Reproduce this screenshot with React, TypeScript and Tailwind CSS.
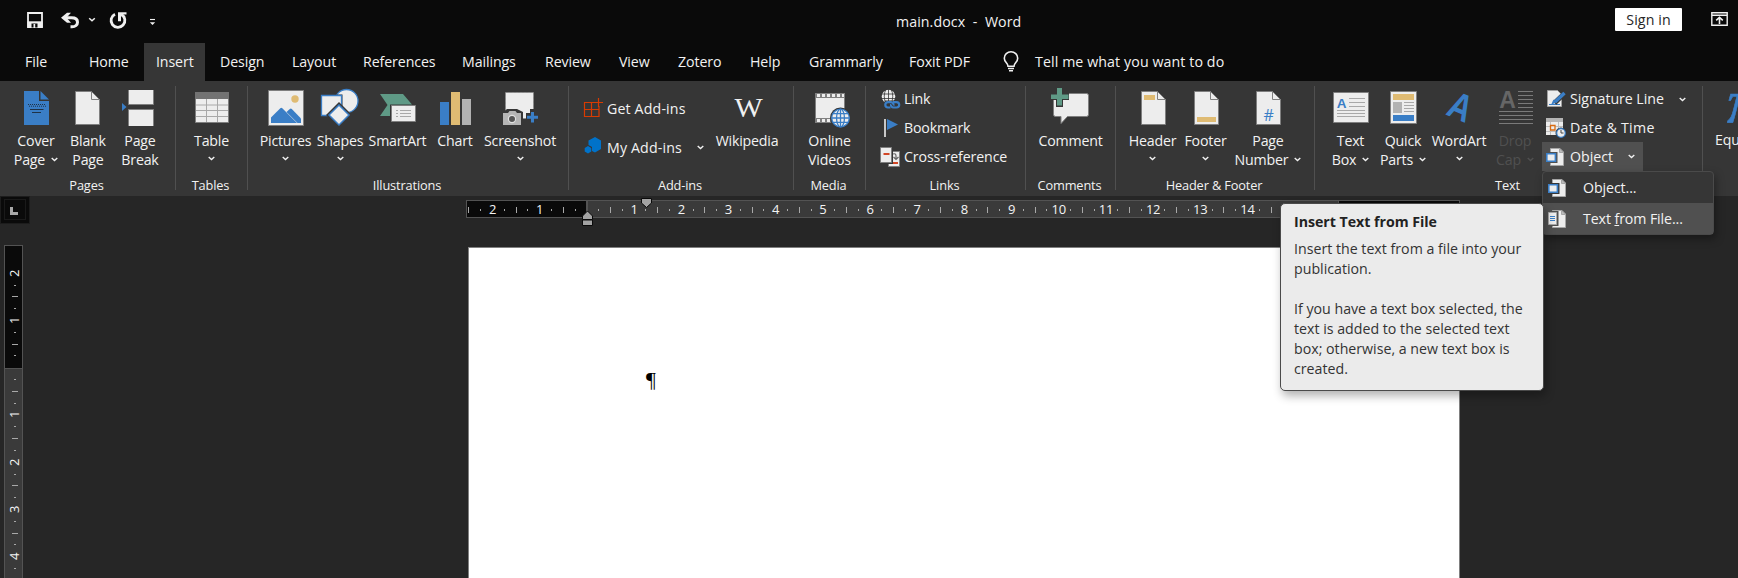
import React from "react";

const BLUE = "#3a7ec6";
const PAPER = "#ededed";
const EDGE = "#7f7f7f";
const GOLD = "#dfbb73";
const GREEN = "#5f9a86";

function Chevron({ className = "" }: { className?: string }) {
  return (
    <svg width="7" height="5" viewBox="0 0 7 5" className={`shrink-0 ${className}`} fill="none" stroke="currentColor" strokeWidth="1.4">
      <path d="M0.7 1 L3.5 3.5 L6.3 1" />
    </svg>
  );
}

type BigProps = { x: number; w: number; size: string; top: string; bottom?: string; menu?: boolean; dim?: boolean; children: React.ReactNode };

function Big({ x, w, size, top, bottom, menu, dim, children }: BigProps) {
  return (
    <button className={`flex h-[92px] shrink-0 flex-col items-center ${size} ${dim ? "text-[#505050]" : "text-[#f2f2f2]"}`}>
      <svg width={w} height="46" viewBox={`${x} 84 ${w} 46`} className="mt-[3px] shrink-0">
        {children}
      </svg>
      <span className="-mb-px flex h-[21px] items-center whitespace-nowrap">{top}</span>
      <span className="flex h-5 items-center gap-[6px] whitespace-nowrap">
        {bottom}
        {menu && <Chevron className={bottom ? "-mt-[2px]" : "-mt-[3px]"} />}
      </span>
    </button>
  );
}

function Group({ label, className, children }: { label: string; className: string; children: React.ReactNode }) {
  return (
    <section className={`relative flex h-full shrink-0 flex-col ${className}`}>
      <div className="flex h-[94px]">{children}</div>
      <div className="mt-px flex h-5 items-center justify-center pr-[3px] text-[12.8px] tracking-[-0.15px] whitespace-nowrap">{label}</div>
      <span className="absolute top-[5px] right-0 h-[104px] w-px bg-[#505050]" />
    </section>
  );
}

function Row({ icon, label, className = "h-[29px]", menu = false }: { icon: React.ReactNode; label: string; className?: string; menu?: boolean }) {
  return (
    <button className={`flex items-center whitespace-nowrap ${className}`}>
      {icon}
      <span>{label}</span>
      {menu && <Chevron className="ml-[15px]" />}
    </button>
  );
}

function Sheet({ x, children }: { x: number; children?: React.ReactNode }) {
  return (
    <g>
      <path d={`M${x + 0.5} 91.5h16l8 8v25h-24z`} fill={PAPER} stroke={EDGE} />
      <path d={`M${x + 16.5} 91.5v8h8`} fill="none" stroke={EDGE} />
      {children}
    </g>
  );
}

function SmallDoc({ text = false, backdrop }: { text?: boolean; backdrop: string }) {
  return (
    <svg width="18" height="18" viewBox="0 0 18 18" className="shrink-0">
      <path d="M4.5 .5h9.5l3.5 3.5v13.5h-13z" fill={PAPER} stroke="#a6a6a6" />
      <path d="M13.5 .5v4h4z" fill="#bbb" stroke="#a6a6a6" />
      {text ? (
        <g>
          <path d="M0 1h10.5v15H0z" fill={backdrop} />
          <path d="M.5 2.5h8v12h-8z" fill={PAPER} stroke="#a6a6a6" />
          <path d="M2 6.5h5M2 8.5h5M2 10.5h5" stroke={BLUE} />
        </g>
      ) : (
        <g>
          <path d="M0 4h11.5v11H0z" fill={backdrop} />
          <path d="M.8 5.8h8.6v7.4H.8z" fill={PAPER} stroke={BLUE} strokeWidth="1.6" />
        </g>
      )}
    </svg>
  );
}

const TABS: [string, string][] = [
  ["File", "w-[63px]"],
  ["Home", "w-[68px] pl-[13px]"],
  ["Insert", "w-[61px] mr-[2px] bg-[#363636]"],
  ["Design", "w-[73px] pl-[13px]"],
  ["Layout", "w-[71px]"],
  ["References", "w-[99px]"],
  ["Mailings", "w-[83px]"],
  ["Review", "w-[74px]"],
  ["View", "w-[59px]"],
  ["Zotero", "w-[72px]"],
  ["Help", "w-[59px]"],
  ["Grammarly", "w-[100px]"],
  ["Foxit PDF", "w-[94px]"],
];

function TitleBar() {
  return (
    <header className="flex h-[43px] items-start">
      <div className="flex h-[43px] w-[806px] pt-[8px] pl-[24px]">
        <svg width="140" height="26" viewBox="24 8 140 26" fill="none" stroke="#f0f0f0">
          <path d="M28 13h14v14h-14z" strokeWidth="1.8" />
          <path d="M27.5 21.3h15v6h-15z" fill="#f0f0f0" stroke="none" />
          <path d="M31.5 23.5h6v4h-6z" fill="#0a0a0a" stroke="none" />
          <path d="M33.5 24h1.7v4h-1.7z" fill="#f0f0f0" stroke="none" />
          <path d="M64 17.8h7.5c4 0 6 2 6 4.4s-2 4.6-5.5 4.6h-1.5" strokeWidth="3" />
          <path d="M61 17.8l6-5h4l-4.5 5 4.5 5h-4z" fill="#f0f0f0" stroke="none" />
          <path d="M89.2 18.2l2.8 2.6 2.8-2.6" strokeWidth="1.5" />
          <path d="M115 14.2a6.9 6.9 0 1 0 6.5 .3" strokeWidth="2.8" />
          <path d="M118 12.2h8.5v2.3h-3.2l-2.3 2v4.800h-3z" fill="#f0f0f0" stroke="none" />
          <path d="M150 19.5h5" strokeWidth="1.1" />
          <path d="M149.8 22.2h5.400l-2.700 2.800z" fill="#f0f0f0" stroke="none" />
        </svg>
      </div>
      <div className="flex h-[43px] flex-1 justify-start pl-[90px] leading-[43px] tracking-[0.08px] whitespace-pre">main.docx&nbsp; -&nbsp; Word</div>
      <div className="mt-[8px] mr-[29px] flex h-[23px] w-[67px] items-center justify-center rounded-[1px] bg-white tracking-[0.1px] text-[#262626]">Sign in</div>
      <svg width="17" height="14" viewBox="0 0 17 14" className="mt-[12px] mr-[10px]" fill="none" stroke="#f0f0f0">
        <path d="M.8.8h15.4v12.4H.8zM.8 3.2h15.4" strokeWidth="1.4" />
        <path d="M8.5 12V5.5M5.2 8.3l3.3-3 3.3 3" strokeWidth="1.6" />
      </svg>
    </header>
  );
}

function Tabs() {
  return (
    <nav className="flex h-[38px] pl-[13px]">
      {TABS.map(([name, size]) => (
        <div key={name} className={`flex shrink-0 items-center tracking-[-0.1px] whitespace-nowrap ${size.includes("pl-") ? "" : "pl-3"} ${size}`}>
          {name}
        </div>
      ))}
      <svg width="16" height="21" viewBox="0 0 16 21" className="mt-[8px] ml-[12px]" fill="none" stroke="#f0f0f0" strokeWidth="1.6">
        <path d="M5 15.2c0-3-3.7-4-3.7-8a6.7 6.4 0 0 1 13.4 0c0 4-3.7 5-3.7 8z" />
        <path d="M5 17.5h6M6 19.7h4" strokeWidth="1.4" />
      </svg>
      <span className="flex items-center pl-[16px] tracking-[0.1px]">Tell me what you want to do</span>
    </nav>
  );
}

function Globe({ cx, cy, r, line, fill }: { cx: number; cy: number; r: number; line: string; fill: string }) {
  return (
    <g fill="none" stroke={line} strokeWidth="1.3">
      <circle cx={cx} cy={cy} r={r} fill={fill} />
      <ellipse cx={cx} cy={cy} rx={r * 0.45} ry={r} />
      <path d={`M${cx - r} ${cy}h${2 * r}M${cx - r * 0.86} ${cy - r / 2}h${r * 1.72}M${cx - r * 0.86} ${cy + r / 2}h${r * 1.72}M${cx} ${cy - r}v${2 * r}`} />
    </g>
  );
}

function Ribbon() {
  return (
    <div className="flex h-[115px] overflow-hidden bg-[#363636]">
      <Group label="Pages" className="w-[176px] [&>div:first-child]:pl-2">
        <Big x={8} w={56} size="w-[56px]" top="Cover" bottom="Page" menu>
          <path d="M24 91h15v10h10v24H24z" fill={BLUE} />
          <path d="M40.5 91l8.5 8.5h-8.5z" fill={BLUE} />
          <path d="M28 104.5h17M29 106.2h17" stroke="#1f3247" strokeWidth="1" strokeDasharray="1 1" />
          <path d="M30 109.5h13.5M32 112.5h9" stroke="#1f3247" />
        </Big>
        <Big x={64} w={48} size="w-[48px]" top="Blank" bottom="Page">
          <Sheet x={75} />
        </Big>
        <Big x={112} w={56} size="w-[56px]" top="Page" bottom="Break">
          <path d="M128.5 90v14.5h25V90M128.5 126v-16.5h25V126" fill={PAPER} stroke={EDGE} />
          <path d="M122 103l4.5 4-4.5 4z" fill={BLUE} />
        </Big>
      </Group>

      <Group label="Tables" className="w-[72px]">
        <Big x={176} w={71} size="w-[71px]" top="Table" menu>
          <path d="M195.5 92.5h33v30h-33z" fill={PAPER} stroke={EDGE} />
          <path d="M195 92h34v7h-34z" fill="#737373" />
          <path d="M196 105h32M196 110.5h32M196 116.5h32M206.5 99v23M217.5 99v23" stroke="#a8a8a8" />
        </Big>
      </Group>

      <Group label="Illustrations" className="w-[321px] [&>div:first-child]:pl-2">
        <Big x={256} w={59} size="w-[59px]" top="Pictures" menu>
          <path d="M268.5 90.5h35v35h-35z" fill={PAPER} stroke={EDGE} />
          <circle cx="295" cy="99" r="3.7" fill={GOLD} />
          <path d="M271 123v-5.5l9.3-9.3q1-.8 2 0L297 123z" fill={BLUE} />
          <path d="M286.5 112l3.3-3q1-.8 2 0l9.2 9.5v4.5h-3.5z" fill={BLUE} />
        </Big>
        <Big x={315} w={50} size="w-[50px]" top="Shapes" menu>
          <circle cx="346.5" cy="101" r="11.5" fill={PAPER} stroke={BLUE} strokeWidth="1.3" />
          <path d="M320 94.5h22.5v22.5h-22.5z" fill="#363636" />
          <path d="M321.5 95.5h20v20h-20z" fill={PAPER} stroke={BLUE} strokeWidth="1.3" />
          <path d="M339 102l13 13-13 13-13-13z" fill="#363636" />
          <path d="M339 105l10 10-10 10-10-10z" fill={PAPER} stroke={BLUE} strokeWidth="1.5" />
        </Big>
        <Big x={365} w={65} size="w-[65px]" top="SmartArt">
          <path d="M380 94h23l9 10.5h-22V116h-10l7.5-11z" fill={GREEN} />
          <path d="M391.5 105.5h24v16h-24z" fill={PAPER} stroke={EDGE} />
          <path d="M396 110.5h2M396 113.5h2M396 116.5h2M400 110.5h11M400 113.5h11M400 116.5h11" stroke="#a8a8a8" />
        </Big>
        <Big x={430} w={50} size="w-[50px]" top="Chart">
          <path d="M440 102h9v23h-9z" fill={BLUE} />
          <path d="M451 92h9v33h-9z" fill={GOLD} />
          <path d="M462 99h9v26h-9z" fill="#b2b2b2" />
        </Big>
        <Big x={480} w={80} size="w-[80px]" top="Screenshot" menu>
          <path d="M505.5 92.5h28v26h-28z" fill={PAPER} stroke="#8a8a8a" strokeDasharray="3 1" />
          <path d="M502 113l5-4h10l6 3v14h-21z" fill="#363636" />
          <path d="M526 113h4v-4h6v4h4v9h-14z" fill="#363636" />
          <path d="M503 113h5l1.5-2h6l1.5 2h4v12h-18z" fill="#b5b5b5" />
          <circle cx="512" cy="119" r="3.6" fill="#555" stroke="#e0e0e0" strokeWidth="1.2" />
          <path d="M532.5 112v10.5M527 117.3h11" stroke={BLUE} strokeWidth="3" />
        </Big>
      </Group>

      <Group label="Add-ins" className="w-[225px]">
        <div className="flex w-[138px] flex-col pt-[8px] pl-[14px]">
          <Row
            className="h-[39px] tracking-[0.15px]"
            label="Get Add-ins"
            icon={
              <svg width="24" height="22" viewBox="583 96 24 22" fill="none" stroke="#d83b01" strokeWidth="1.2" className="-mt-[3px]">
                <path d="M595 102.5h-10.5v14h14.5v-10.5M584.5 109.5h14.5M591.5 102.5v14M598.5 98v9M594 102.5h9" />
              </svg>
            }
          />
          <Row
            className="h-[39px] tracking-[0.15px]"
            label="My Add-ins"
            menu
            icon={
              <svg width="24" height="20" viewBox="583 137 24 20" className="-mt-[3px]" fill="#0072c9">
                <path d="M595 138l6 3.5v8.5l-6 3.5-3-1.5v-4l-3.5-2v-4.5z" />
                <path d="M588 147l3.3 2v3.5l-3.3 2-3.3-2V149z" />
              </svg>
            }
          />
        </div>
        <Big x={707} w={80} size="w-[80px]" top="Wikipedia">
          <text x="734.5" y="116.500" fontSize="27" textLength="28" lengthAdjust="spacingAndGlyphs" fill="#f0f0f0" fontFamily="Liberation Serif, serif">W</text>
        </Big>
      </Group>

      <Group label="Media" className="w-[72px]">
        <Big x={794} w={71} size="w-[71px]" top="Online" bottom="Videos">
          <path d="M815.5 93.5h29v29h-29z" fill={PAPER} stroke={EDGE} />
          <path d="M815 93h30v5h-30zM815 118h30v5h-30z" fill={EDGE} />
          <path d="M817 95.5h27M817 120.5h16" stroke={PAPER} strokeWidth="3" strokeDasharray="3 2" />
          <circle cx="840.5" cy="118" r="10.5" fill="#363636" />
          <Globe cx={840.5} cy={118} r={8.8} line={BLUE} fill={PAPER} />
        </Big>
      </Group>

      <Group label="Links" className="w-[160px]">
        <div className="flex flex-col pt-[3px] pl-[14px]">
          <Row
            label="Link"
            icon={
              <svg width="24" height="22" viewBox="880 88 24 22">
                <circle cx="888.5" cy="96.5" r="6.8" fill={PAPER} />
                <path d="M881 94h15M881 98.5h15M888.5 89v15M886 89q-3.5 7 0 15M891 89q3.5 7 0 15" fill="none" stroke="#363636" strokeWidth=".8" />
                <path d="M885 100.5h17v9h-18v-6z" fill="#363636" />
                <g fill="none" stroke={BLUE} strokeWidth="2.2">
                  <path d="M890.5 107.5h-2.5a2.7 2.7 0 0 1 0-5.4h3c2.5 0 2 2.7 3.5 2.7" />
                  <path d="M893 102.1h3.5a2.7 2.7 0 0 1 0 5.4h-3c-2.5 0-2-2.7-3.5-2.7" />
                </g>
              </svg>
            }
          />
          <Row
            label="Bookmark"
            icon={
              <svg width="24" height="22" viewBox="880 116 24 22">
                <path d="M884 118h2v18h-2z" fill="#c8c8c8" />
                <path d="M887 118l11 5.5-11 5.5z" fill={BLUE} />
              </svg>
            }
          />
          <Row
            label="Cross-reference"
            className="h-[29px] tracking-[-0.13px]"
            icon={
              <svg width="24" height="22" viewBox="880 145 24 22">
                <path d="M888.5 150.5h11v15h-11z" fill={PAPER} stroke={EDGE} />
                <path d="M893 162h5" stroke="#d24726" strokeWidth="2" />
                <path d="M893 153q3-1 3 2v3M893.5 156l2.5 2.5 2.5-2.5" fill="none" stroke="#666" strokeWidth="1.2" />
                <path d="M880 146h13v17h-13z" fill="#363636" />
                <path d="M880.5 146.5h11v15h-11z" fill={PAPER} stroke={EDGE} />
                <path d="M883.5 153h6" stroke="#d24726" strokeWidth="2" />
              </svg>
            }
          />
        </div>
      </Group>

      <Group label="Comments" className="w-[90px]">
        <Big x={1026} w={89} size="w-[89px]" top="Comment">
          <path d="M1055.5 93.5h31q2 0 2 2v19q0 2-2 2h-19l-6.5 7v-7h-5.5q-2 0-2-2v-19q0-2 2-2z" fill={PAPER} stroke={EDGE} />
          <path d="M1056 87h7v6h6v7h-6v7h-7v-7h-6v-7h6z" fill="#363636" />
          <path d="M1057 88h5v6.5h6.5v4.5H1062v6.5h-5V99h-6v-4.5h6z" fill={GREEN} />
        </Big>
      </Group>

      <Group label="Header &amp; Footer" className="w-[199px] [&>div:first-child]:pl-[9px]">
        <Big x={1125} w={55} size="w-[55px]" top="Header" menu>
          <Sheet x={1141}>
            <path d="M1144 95h11v5h-11z" fill={GOLD} />
          </Sheet>
        </Big>
        <Big x={1180} w={51} size="w-[51px]" top="Footer" menu>
          <Sheet x={1194}>
            <path d="M1197 117h19v5h-19z" fill={GOLD} />
          </Sheet>
        </Big>
        <Big x={1231} w={74} size="w-[74px]" top="Page" bottom="Number" menu>
          <Sheet x={1256}>
            <text x="1268.5" y="120.5" textAnchor="middle" fontSize="16" fill={BLUE} fontFamily="Open Sans, sans-serif">#</text>
          </Sheet>
        </Big>
      </Group>

      <Group label="Text" className="w-[388px] [&>div:first-child]:pl-[10px]">
        <Big x={1325} w={51} size="w-[51px]" top="Text" bottom="Box" menu>
          <path d="M1333.5 92.5h35v30h-35z" fill={PAPER} stroke={EDGE} />
          <text x="1341.5" y="108" textAnchor="middle" fontSize="13.5" fontWeight="700" fill={BLUE} fontFamily="Liberation Sans, sans-serif">A</text>
          <path d="M1349 98.5h16M1349 102.5h16M1349 106.5h16M1337 110.5h28M1337 113.5h28M1337 116.5h28" stroke="#a8a8a8" />
        </Big>
        <Big x={1376} w={54} size="w-[54px]" top="Quick" bottom="Parts" menu>
          <path d="M1390.5 91.5h26v32h-26z" fill={PAPER} stroke={EDGE} />
          <path d="M1393 94h21v6h-21z" fill={GOLD} />
          <path d="M1393 102h9v11h-9z" fill="#b2b2b2" />
          <path d="M1404 102.5h10M1404 105.5h10M1404 108.5h10M1404 111.5h10" stroke="#a8a8a8" />
          <path d="M1393 115h21v6h-21z" fill={BLUE} />
        </Big>
        <Big x={1430} w={58} size="w-[58px]" top="WordArt" menu>
          <text transform="matrix(1 .42 -.55 1.2 1455 118.5)" textAnchor="middle" fontSize="29" fontWeight="700" fill={BLUE} fontFamily="Liberation Sans, sans-serif">A</text>
        </Big>
        <Big x={1488} w={54} size="w-[54px]" top="Drop" bottom="Cap" menu dim>
          <text x="1507.5" y="108" textAnchor="middle" fontSize="23" fontWeight="700" fill="#666" fontFamily="Liberation Sans, sans-serif">A</text>
          <path d="M1518 91.5h15M1518 95.5h15M1518 99.5h15M1518 103.5h15M1518 107.5h15M1499 111.5h34M1499 115.5h34M1499 119.5h34M1499 123.5h34" stroke="#7a7a7a" />
        </Big>
        <div className="flex w-[150px] flex-col pt-[3px]">
          <Row
            className="h-[29px] pt-px pl-[4px] tracking-[-0.05px]"
            label="Signature Line"
            menu
            icon={
              <svg width="24" height="22" viewBox="1546 88 24 22">
                <path d="M1547.5 90.5h10l4 4v12h-14z" fill={PAPER} stroke="#a0a0a0" />
                <path d="M1549 104.5h11" stroke={BLUE} />
                <path d="M1565.5 92.5l-11 10.5" stroke="#363636" strokeWidth="5" />
                <path d="M1564.5 93l-9.5 9" stroke={BLUE} strokeWidth="3.5" />
                <path d="M1551 105l2.5-5.5 2.5 3z" fill={BLUE} />
              </svg>
            }
          />
          <Row
            className="h-[29px] pt-px pl-[4px] tracking-[0.3px]"
            label="Date &amp; Time"
            icon={
              <svg width="24" height="22" viewBox="1546 116 24 22">
                <path d="M1546 117h17v17h-17z" fill={PAPER} />
                <path d="M1546 117h17v4h-17z" fill="#b5b5b5" />
                <path d="M1550.5 121v13M1558.5 121v13M1546 125.5h17M1546 130.5h17" stroke="#bdbdbd" />
                <path d="M1550.5 124.5h4.5v4.5h-4.5z" fill={PAPER} stroke="#d86a10" strokeWidth="1.3" />
                <circle cx="1561" cy="132" r="5.5" fill="#363636" />
                <circle cx="1561" cy="132" r="4.3" fill={PAPER} stroke={BLUE} strokeWidth="1.2" />
                <path d="M1561 129v3h2.5" fill="none" stroke="#444" />
              </svg>
            }
          />
          <Row
            className="h-[29px] w-[101px] bg-[#505050] pl-[4px] tracking-[0px] [&>span]:pl-[6px]"
            label="Object"
            menu
            icon={<SmallDoc backdrop="#505050" />}
          />
        </div>
      </Group>
      <div className="flex w-[35px] shrink-0 flex-col overflow-hidden pl-[12px]">
        <svg width="23" height="46" viewBox="1715 84 23 46" className="mt-[3px] shrink-0">
          <text x="1727" y="121.500" fontSize="62" fontStyle="italic" fill={BLUE} stroke={BLUE} strokeWidth=".6" fontFamily="Liberation Serif, serif">π</text>
        </svg>
        <span className="flex h-5 items-center whitespace-nowrap">Equation</span>
      </div>
    </div>
  );
}

const H_CELLS = Array.from({ length: 72 }, (_, i) => i - 10);
const V_CELLS = Array.from({ length: 28 }, (_, i) => i - 10);

function HRuler() {
  return (
    <div className="relative ml-[466px] flex h-[18px] w-[994px] border border-[#535353] bg-[linear-gradient(90deg,#0a0a0a_119px,#535353_119px,#535353_121px,#3a3a3a_121px,#3a3a3a_871px,#535353_871px,#535353_872px,#0a0a0a_872px)]">
      <div className="-ml-[4px] flex h-full">
        {H_CELLS.map((n) => (
          <span key={n} className="flex w-[11.8px] shrink-0 items-center justify-center text-[13px] leading-4 font-medium text-[#f4f4f4]">
            {n === 0 ? null : n % 4 === 0 && n < 60 ? (
              <b className="font-medium">{Math.abs(n / 4)}</b>
            ) : n % 2 === 0 ? (
              <i className="mt-[2px] h-[6px] w-px bg-[#a8a8a8]" />
            ) : (
              <i className="mt-[2px] h-[2px] w-px bg-[#a8a8a8]" />
            )}
          </span>
        ))}
      </div>
      <svg width="12" height="17" viewBox="0 0 12 17" className="absolute top-[9px] left-[115px]" fill="#a3a3a3" stroke="#0a0a0a">
        <path d="M.5 15.5v-5.5h10v5.5z" />
        <path d="M.5 9.5V6L5.5 1l5 5v3.5z" />
      </svg>
      <svg width="11" height="10" viewBox="0 0 11 10" className="absolute -top-[3px] left-[174px]" fill="#a3a3a3" stroke="#0a0a0a">
        <path d="M.5 .5h10V5l-5 4.5L.5 5z" />
      </svg>
    </div>
  );
}

function VRuler() {
  return (
    <div className="mt-[21px] ml-[4px] flex h-[340px] w-[19px] flex-col overflow-hidden border border-b-0 border-[#535353] bg-[linear-gradient(180deg,#0a0a0a_122px,#535353_122px,#535353_123px,#3a3a3a_123px)]">
      {V_CELLS.map((n) => (
        <span key={n} className={`flex w-full shrink-0 items-center justify-center pl-[2px] text-[13px] leading-none text-[#f4f4f4] ${n === -10 ? "h-[10px]" : "h-[11.8125px]"}`}>
          {n === 0 || n < -8 ? null : n % 4 === 0 ? <b className="-rotate-90 font-medium">{Math.abs(n / 4)}</b> : n % 2 === 0 ? <i className="h-px w-[6px] bg-[#a8a8a8]" /> : <i className="h-px w-[2px] bg-[#a8a8a8]" />}
        </span>
      ))}
    </div>
  );
}

function ObjectMenu() {
  return (
    <div className="absolute top-[171px] left-[1542px] h-[64px] w-[172px] rounded-[4px] border border-[#4a4a4a] bg-[#363636] shadow-[2px_4px_8px_rgba(0,0,0,0.35)]">
      <div className="flex h-[31px] items-center pl-[5px]">
        <SmallDoc backdrop="#363636" />
        <span className="pt-px pl-[17px] tracking-[-0.1px]">
          Ob<u className="underline-offset-1">j</u>ect...
        </span>
      </div>
      <div className="flex h-[31px] items-center bg-[#505050] pl-[5px]">
        <SmallDoc text backdrop="#505050" />
        <span className="pl-[17px] tracking-[-0.1px]">
          Text <u className="underline-offset-1">f</u>rom File...
        </span>
      </div>
    </div>
  );
}

function Tooltip() {
  return (
    <div className="absolute top-[203px] left-[1280px] h-[188px] w-[264px] rounded-[5px] border border-[#4a4a4a] bg-[#ebebeb] px-[13px] pt-[8px] leading-5 tracking-[0px] whitespace-nowrap text-[#333] shadow-[2px_5px_10px_rgba(0,0,0,0.3)]">
      <p className="text-[14.2px] font-bold tracking-[-0.03px] text-[#222]">Insert Text from File</p>
      <p className="mt-[7px]">
        Insert the text from a file into your
        <br />
        publication.
      </p>
      <p className="mt-5">
        If you have a text box selected, the
        <br />
        text is added to the selected text
        <br />
        box; otherwise, a new text box is
        <br />
        created.
      </p>
    </div>
  );
}

export default function App() {
  return (
    <div className="relative h-[578px] w-[1738px] overflow-hidden bg-[#0a0a0a] font-['Open_Sans','Noto_Sans',sans-serif] text-[14.2px] tracking-[-0.2px] text-[#f2f2f2]">
      <TitleBar />
      <Tabs />
      <Ribbon />
      <main className="flex h-[382px] bg-[#262626]">
        <div className="flex w-[30px] shrink-0 flex-col">
          <div className="flex h-[28px] items-center justify-center border border-[#1c1c1c] bg-[#0a0a0a]">
            <span className="flex h-[21px] w-[22px] items-center justify-center border border-[#1a1a1a]">
              <i className="mt-[3px] mr-[2px] h-[8px] w-[8px] border-b-[3px] border-l-[3px] border-[#a8a8a8]" />
            </span>
          </div>
          <VRuler />
        </div>
        <div className="-ml-[30px] flex flex-col pt-[4px]">
          <HRuler />
          <div className="mt-[29px] ml-[468px] h-[340px] w-[992px] border border-b-0 border-[#808080] bg-white pt-[118px] pl-[177px] font-['Liberation_Serif',serif] text-[22px] leading-7 text-black">¶</div>
        </div>
      </main>
      <ObjectMenu />
      <Tooltip />
    </div>
  );
}
